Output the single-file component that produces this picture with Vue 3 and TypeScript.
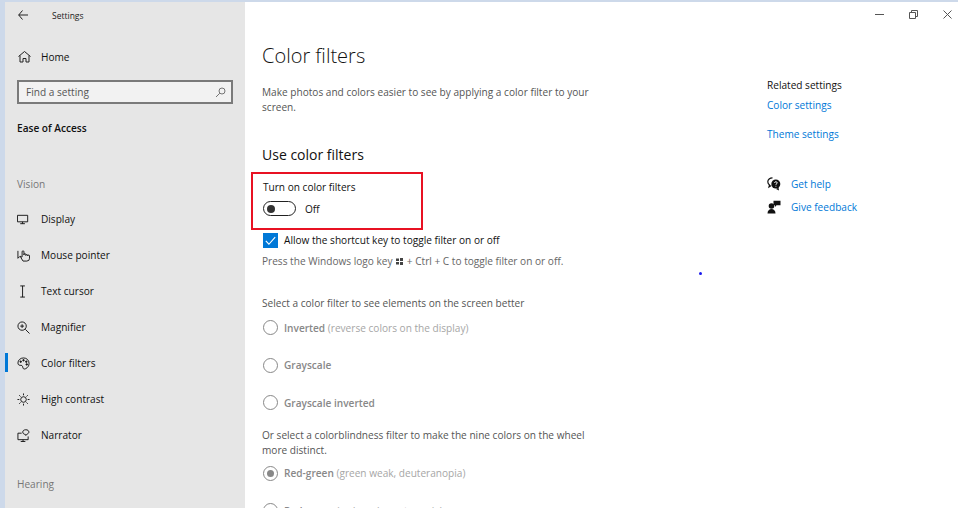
<script setup lang="ts">
const navItems = [
  { label: 'Display', icon: 'display' },
  { label: 'Mouse pointer', icon: 'mouse' },
  { label: 'Text cursor', icon: 'cursor' },
  { label: 'Magnifier', icon: 'magnifier' },
  { label: 'Color filters', icon: 'palette', active: true },
  { label: 'High contrast', icon: 'contrast' },
  { label: 'Narrator', icon: 'narrator' },
]
</script>

<template>
  <div class="window">
    <aside class="sidebar">
      <div class="titlebar">
        <svg class="back" width="10" height="10" viewBox="0 0 10 10"><path d="M4.500.5.700 5l3.800 4.500M.7 5H10" fill="none" stroke="#222" stroke-width="1"/></svg>
        <span class="app-title">Settings</span>
      </div>
      <div class="home">
        <svg width="13" height="12" viewBox="0 0 13 12"><path d="M.5 5.500 6.500.5l6 5M2 4.500V11h3V7.500h3V11h3V4.500" fill="none" stroke="#222" stroke-width="1"/></svg>
        <span>Home</span>
      </div>
      <div class="search">
        <span>Find a setting</span>
        <svg width="11" height="11" viewBox="0 0 11 11"><circle cx="7" cy="4" r="3" fill="none" stroke="#666" stroke-width=".9"/><path d="M4.800 6.200 1 10" stroke="#666" stroke-width=".9"/></svg>
      </div>
      <div class="section-title">Ease of Access</div>
      <div class="group-label vision">Vision</div>
      <nav>
        <div v-for="item in navItems" :key="item.label" class="nav-item" :class="{ active: item.active }">
          <svg class="nav-icon" width="13" height="13" viewBox="0 0 14 14" fill="none" stroke="#111" stroke-width="1">
            <template v-if="item.icon === 'display'"><path d="M.5 2.500h11v7h-11zM6 9.500v2M3.500 11.500h5"/></template>
            <template v-else-if="item.icon === 'mouse'"><path d="M1 2v8l2-2h1.500"/><path d="M6.500 13 4 9l1.500-.5V3a1 1 0 0 1 2 0v3.500V6a1 1 0 0 1 2 0v1a1 1 0 0 1 2 0v.5a1 1 0 0 1 2 0V10a3 3 0 0 1-3 3z"/></template>
            <template v-else-if="item.icon === 'cursor'"><path d="M3.500 1h5M3.500 13h5M6 1v12"/></template>
            <template v-else-if="item.icon === 'magnifier'"><circle cx="5.500" cy="5.500" r="4.500"/><path d="M3.500 5.500h4M5.500 3.500v4M9 9l4.500 4.500"/></template>
            <template v-else-if="item.icon === 'palette'"><path d="M7 1C3.500 1 1 3.500 1 6.500 1 9 3 9 4.500 9 6 9 6 10.500 6.500 12c.5 1.300 2 1 3 .5 2-1 3.500-3 3.500-5.500C13 3.500 10.500 1 7 1z"/><circle cx="4" cy="5" r=".8" fill="#111"/><circle cx="7" cy="3.500" r=".8" fill="#111"/><circle cx="10" cy="5" r=".8" fill="#111"/><circle cx="10.500" cy="8" r=".8" fill="#111"/></template>
            <template v-else-if="item.icon === 'contrast'"><circle cx="7" cy="7" r="3"/><path d="M7 .5v2M7 11.500v2M.5 7h2M11.500 7h2M2.400 2.400l1.400 1.400M10.200 10.200l1.400 1.400M2.400 11.600l1.400-1.400M10.200 3.800l1.400-1.400"/></template>
            <template v-else><path d="M5 4.500H1v7h11V8M6.500 11.500v2M4 13.500h5"/><path d="M9.500.800c-2 0-3.300 1-3.300 2.500s1.300 2.500 2.800 2.500L9.500 7l1.300-1.500c1.200-.5 2-1.200 2-2.200C12.800 1.800 11.500.800 9.500.800z"/></template>
          </svg>
          <span>{{ item.label }}</span>
        </div>
      </nav>
      <div class="group-label hearing">Hearing</div>
    </aside>

    <main class="content">
      <div class="window-controls">
        <svg width="9" height="9" viewBox="0 0 9 9"><path d="M0 4.500h9" stroke="#555"/></svg>
        <svg width="9" height="9" viewBox="0 0 9 9" fill="none" stroke="#555"><path d="M.5 2.500h6v6h-6zM2.500 2.500V.5h6v6H6.500"/></svg>
        <svg width="9" height="9" viewBox="0 0 9 9"><path d="M.5.500l8 8M8.500.5l-8 8" stroke="#555"/></svg>
      </div>
      <div class="columns">
        <section class="main-col">
          <h1>Color filters</h1>
          <p class="desc">Make photos and colors easier to see by applying a color filter to your screen.</p>
          <h2>Use color filters</h2>
          <div class="highlight">
            <div class="toggle-label">Turn on color filters</div>
            <div class="toggle-row">
              <span class="toggle"><i></i></span>
              <span>Off</span>
            </div>
          </div>
          <div class="check-row">
            <span class="checkbox">
              <svg width="15" height="15" viewBox="0 0 16 16"><path d="M3 8.500 6.300 12 13 4.500" fill="none" stroke="#fff" stroke-width="1.200"/></svg>
            </span>
            <span>Allow the shortcut key to toggle filter on or off</span>
          </div>
          <p class="hint">Press the Windows logo key
            <svg class="winkey" width="7" height="7" viewBox="0 0 7 7"><path d="M0 .5h3v2.500H0zM4 0h3v3H4zM0 4h3v2.500H0zM4 4h3v3H4z" fill="#444"/></svg>
            + Ctrl + C to toggle filter on or off.</p>
          <p class="select-a">Select a color filter to see elements on the screen better</p>
          <div class="radio-row first-a"><span class="radio"></span><span class="dim"><b>Inverted</b> (reverse colors on the display)</span></div>
          <div class="radio-row"><span class="radio"></span><span class="dim"><b>Grayscale</b></span></div>
          <div class="radio-row"><span class="radio"></span><span class="dim"><b>Grayscale inverted</b></span></div>
          <p class="select-b">Or select a colorblindness filter to make the nine colors on the wheel more distinct.</p>
          <div class="radio-row first-b"><span class="radio on"><i></i></span><span class="dim"><b>Red-green</b> (green weak, deuteranopia)</span></div>
          <div class="radio-row"><span class="radio"></span><span class="dim"><b>Red-green</b> (red weak, protanopia)</span></div>
        </section>
        <section class="side-col">
          <div class="related">Related settings</div>
          <a class="link color-link">Color settings</a>
          <a class="link theme-link">Theme settings</a>
          <div class="help help-first">
            <svg width="14" height="14" viewBox="0 0 14 14"><path d="M5.500.8C2.800.8.800 2.500.8 4.800c0 1.300.7 2.400 1.700 3.200L2 10l2.300-1.500" fill="none" stroke="#111" stroke-width="1.200"/><circle cx="8.800" cy="7" r="4.500" fill="#111"/><path d="M9 12l3 1.500-.5-3z" fill="#111"/><path d="M7.500 5.800c.2-1.500 2.700-1.300 2.700 0 0 1-1.300 1-1.300 2M8.900 8.800v.8" fill="none" stroke="#fff"/></svg>
            <a class="link">Get help</a>
          </div>
          <div class="help">
            <svg width="14" height="14" viewBox="0 0 14 14" fill="#111"><circle cx="4.500" cy="6" r="2.800"/><path d="M.5 13.500c0-3 1.800-4.500 4-4.500s4 1.500 4 4.500z"/><path d="M6.500.800h7v4.500H9.500L8 7V5.300H6.500z"/></svg>
            <a class="link">Give feedback</a>
          </div>
        </section>
      </div>
      <span class="dot"></span>
    </main>
  </div>
</template>

<style>
html, body { margin: 0; overflow: hidden; }
</style>

<style scoped>
.window {
  width: 958px; height: 508px; box-sizing: border-box; overflow: hidden;
  display: flex; background: #cdd9ea; padding: 2px 0 0 5px;
  font-family: "Open Sans", "Noto Sans", sans-serif; font-size: 10.1px; color: #111;
}
.sidebar { width: 240px; flex: none; background: #e6e6e6; }
.titlebar { height: 26px; display: flex; align-items: center; padding-left: 13px; font-size: 8.5px; color: #222; }
.back { margin-right: 24px; }
.home { margin-top: 17px; height: 24px; display: flex; align-items: center; padding-left: 13px; gap: 10px; }
.search {
  margin: 11px 0 0 12px; width: 216px; height: 24px; box-sizing: border-box;
  border: 2px solid #7a7a7a; background: #f2f2f2; color: #555; display: flex;
  align-items: center; justify-content: space-between; padding: 0 5px 0 7px;
}
.section-title { margin: 16px 0 0 12px; height: 16px; line-height: 16px; font-weight: 600; }
.group-label { padding-left: 12px; color: #767676; height: 16px; line-height: 16px; }
.vision { margin-top: 40px; }
.hearing { margin-top: 23px; }
nav { margin-top: 9px; }
.nav-item { height: 36px; display: flex; align-items: center; padding-left: 12px; gap: 11px; position: relative; }
.nav-icon { flex: none; }
.nav-item.active::before { content: ""; position: absolute; left: 0; top: 8px; width: 3px; height: 19px; background: #0078d7; }
.content { flex: 1; background: #fff; position: relative; min-width: 0; }
.window-controls { position: absolute; right: 6px; top: 8px; display: flex; gap: 25px; }
.columns { display: flex; padding-left: 17px; }
.main-col { width: 340px; flex: none; }
.side-col { margin-left: 165px; padding-top: 75px; }
h1 { margin: 39px 0 0; font-size: 20px; font-weight: 300; line-height: 30px; color: #111; }
.desc { margin: 14px 0 0; line-height: 15px; color: #555; width: 335px; }
h2 { margin: 30px 0 0; font-size: 14px; font-weight: 400; line-height: 20px; color: #111; }
.highlight { margin: 7px 0 0 -11px; width: 172px; height: 58px; box-sizing: border-box; border: 2px solid #e81123; padding: 5px 0 0 10px; }
.toggle-label { line-height: 16px; }
.toggle-row { margin-top: 6px; display: flex; align-items: center; gap: 9px; }
.toggle { width: 33px; height: 15px; box-sizing: border-box; border: 1.500px solid #222; border-radius: 8px; display: flex; align-items: center; padding-left: 3px; }
.toggle i { width: 8px; height: 8px; border-radius: 50%; background: #333; }
.check-row { display: flex; align-items: center; gap: 6px; height: 20px; }
.checkbox { width: 15px; height: 15px; background: #0078d7; display: block; margin-left: 1px; }
.checkbox svg { display: block; }
.hint { margin: 3px 0 0; line-height: 16px; color: #666; }
.winkey { margin: 0 1px; }
.select-a { margin: 26px 0 0; line-height: 16px; color: #555; }
.radio-row { display: flex; align-items: center; gap: 6px; height: 37.5px; color: #999; }
.first-a { margin-top: -2px; }
.radio { width: 15px; height: 15px; box-sizing: border-box; border: 1.500px solid #888; border-radius: 50%; margin-left: 1px; display: flex; align-items: center; justify-content: center; }
.radio.on i { width: 7px; height: 7px; border-radius: 50%; background: #888; }
.dim { color: #a6a6a6; }
.dim b { font-weight: 600; color: #888; }
.select-b { margin: 6px 0 0; line-height: 15px; color: #555; width: 335px; }
.first-b { margin-top: -3px; }
.related { line-height: 16px; color: #111; }
.link { color: #0078d7; display: block; line-height: 16px; }
.color-link { margin-top: 4px; }
.theme-link { margin-top: 13px; }
.help { display: flex; align-items: center; gap: 10px; height: 23px; }
.help-first { margin-top: 30px; }
.dot { position: absolute; left: 454px; top: 270px; width: 3px; height: 3px; border-radius: 50%; background: #1a1aee; }
</style>
